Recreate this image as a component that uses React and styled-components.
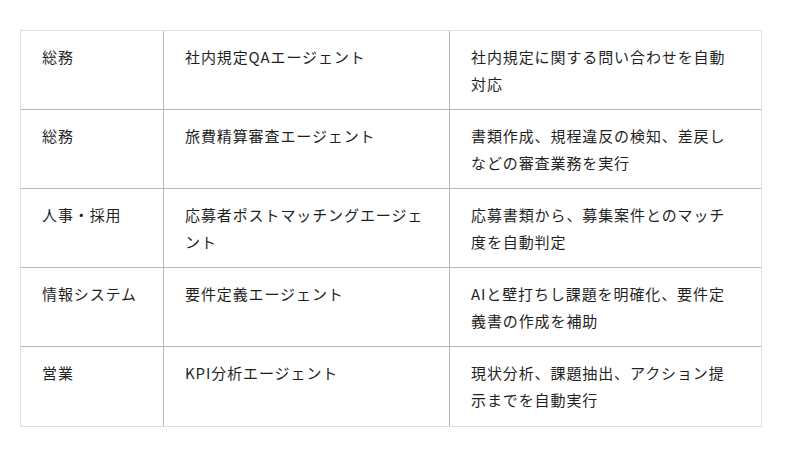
import React from "react";
import styled, { createGlobalStyle } from "styled-components";

const rows = [
  ["総務", "社内規定QAエージェント", "社内規定に関する問い合わせを自動対応"],
  ["総務", "旅費精算審査エージェント", "書類作成、規程違反の検知、差戻しなどの審査業務を実行"],
  ["人事・採用", "応募者ポストマッチングエージェント", "応募書類から、募集案件とのマッチ度を自動判定"],
  ["情報システム", "要件定義エージェント", "AIと壁打ちし課題を明確化、要件定義書の作成を補助"],
  ["営業", "KPI分析エージェント", "現状分析、課題抽出、アクション提示までを自動実行"],
];

const App = () => {
  return (
    <Page>
      <GlobalStyle />
      <Table>
        {rows.map((row, r) =>
          row.map((text, c) => (
            <Cell key={`${r}-${c}`} $lastCol={c === 2} $lastRow={r === rows.length - 1}>
              {text}
            </Cell>
          ))
        )}
      </Table>
    </Page>
  );
};

const GlobalStyle = createGlobalStyle`
  body {
    margin: 0;
    background: #ffffff;
    font-family: "Noto Sans CJK JP", "Noto Sans", sans-serif;
  }
`;

const Page = styled.div`
  width: 800px;
  height: 456px;
  box-sizing: border-box;
  padding: 30px 38px 0 20px;
`;

const Table = styled.div`
  display: grid;
  grid-template-columns: 143px 286px 1fr;
  grid-auto-rows: 79px;
  border: 1px solid #dedede;
  border-right-color: #e2e2e2;
`;

const Cell = styled.div`
  box-sizing: border-box;
  padding: 12px ${(p) => (p.$lastCol ? "29px" : "20px")} 0 21px;
  font-size: 15px;
  line-height: 27px;
  letter-spacing: 0.9px;
  color: #1f1f1f;
  border-right: ${(p) => (p.$lastCol ? "none" : "1px solid #b8b8b8")};
  border-bottom: ${(p) => (p.$lastRow ? "none" : "1px solid #b8b8b8")};
`;

export default App;
